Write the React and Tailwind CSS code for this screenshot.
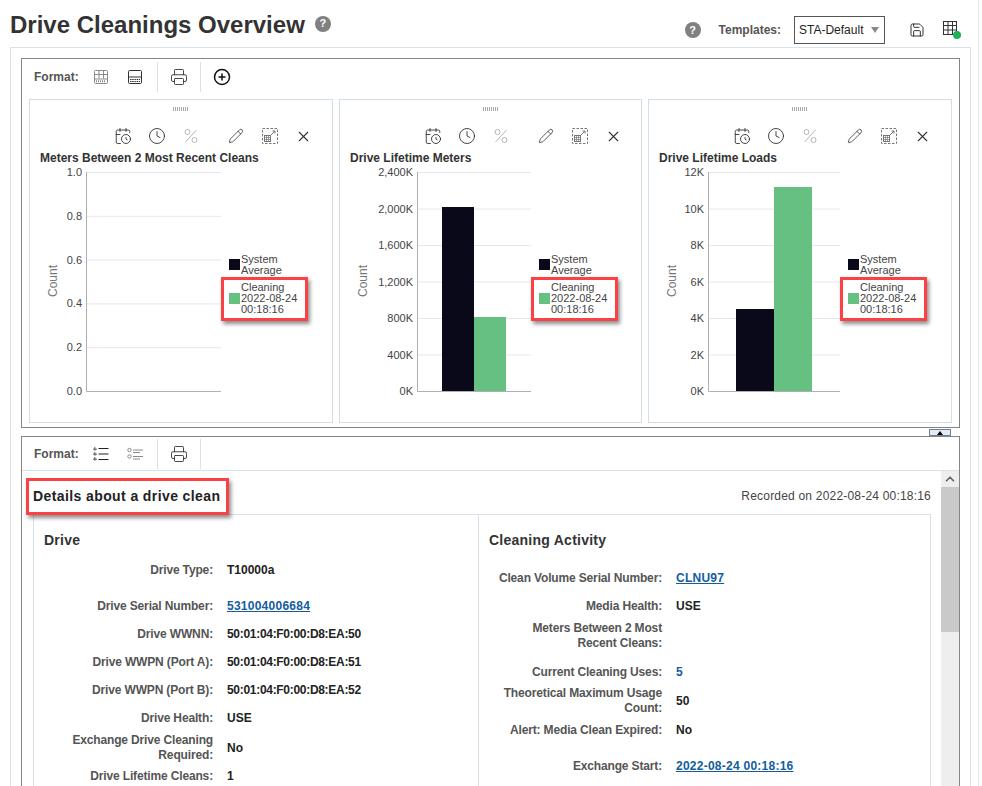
import { CalendarClock, Clock, Pencil, X, Printer, Save, CirclePlus, ChevronUp } from 'lucide-react';

const charts = [
  {
    title: 'Meters Between 2 Most Recent Cleans',
    cardClass: 'w-[304px]',
    axisX: 57,
    ticks: ['1.0', '0.8', '0.6', '0.4', '0.2', '0.0'],
    bars: [],
  },
  {
    title: 'Drive Lifetime Meters',
    cardClass: 'w-[303px]',
    axisX: 78,
    ticks: ['2,400K', '2,000K', '1,600K', '1,200K', '800K', '400K', '0K'],
    bars: [
      { x: 103, w: 32, top: 207, fill: '#090919' },
      { x: 135, w: 32, top: 317, fill: '#66c082' },
    ],
  },
  {
    title: 'Drive Lifetime Loads',
    cardClass: 'w-[304px]',
    axisX: 60,
    ticks: ['12K', '10K', '8K', '6K', '4K', '2K', '0K'],
    bars: [
      { x: 88, w: 38, top: 309, fill: '#090919' },
      { x: 126, w: 38, top: 187, fill: '#66c082' },
    ],
  },
];

const driveRows = [
  { label: 'Drive Type:', value: 'T10000a', cls: 'h-[28px]' },
  { label: 'Drive Serial Number:', value: '531004006684', link: true, cls: 'h-[28px] mt-[8px]' },
  { label: 'Drive WWNN:', value: '50:01:04:F0:00:D8:EA:50', tight: true, cls: 'h-[28px]' },
  { label: 'Drive WWPN (Port A):', value: '50:01:04:F0:00:D8:EA:51', tight: true, cls: 'h-[28px]' },
  { label: 'Drive WWPN (Port B):', value: '50:01:04:F0:00:D8:EA:52', tight: true, cls: 'h-[28px]' },
  { label: 'Drive Health:', value: 'USE', cls: 'h-[28px]' },
  { label: 'Exchange Drive Cleaning Required:', value: 'No', cls: 'h-[32px]' },
  { label: 'Drive Lifetime Cleans:', value: '1', cls: 'h-[24px]' },
];

const cleaningRows = [
  { label: 'Clean Volume Serial Number:', value: 'CLNU97', link: true, cls: 'h-[28px]' },
  { label: 'Media Health:', value: 'USE', cls: 'h-[28px]' },
  { label: 'Meters Between 2 Most Recent Cleans:', value: '', cls: 'h-[31px]' },
  { label: 'Current Cleaning Uses:', value: '5', blue: true, cls: 'h-[28px] mt-[7px]' },
  { label: 'Theoretical Maximum Usage Count:', value: '50', cls: 'h-[30px]' },
  { label: 'Alert: Media Clean Expired:', value: 'No', cls: 'h-[28px]' },
  { label: 'Exchange Start:', value: '2022-08-24 00:18:16', link: true, cls: 'h-[28px] mt-[8px]' },
];

function GridIcon({ color = '#8a8a8a' }) {
  return (
    <svg width="16" height="16" viewBox="0 0 16 16" fill="none" stroke={color}>
      <rect x="1.5" y="1.5" width="13" height="13" rx="1" />
      <path d="M1.5 5.5h13M6 1.5v8M10.5 1.5v8" />
      <path d="M1.5 10h13M3 12.2h10" strokeDasharray="1 1" strokeWidth="2" />
    </svg>
  );
}

function FooterGridIcon() {
  return (
    <svg width="16" height="16" viewBox="0 0 16 16" fill="none" stroke="#333">
      <rect x="1.5" y="1.5" width="13" height="13" rx="1" />
      <path d="M1.5 8h13" />
      <path d="M3 10.5h10M3 12.5h10" strokeDasharray="1.5 0.7" />
    </svg>
  );
}

function ListIcon({ muted }) {
  const c = muted ? '#8a8a8a' : '#222';
  return (
    <svg width="16" height="16" viewBox="0 0 16 16" fill="none" stroke={c}>
      {muted ? (
        <>
          <circle cx="2.5" cy="4" r="1.7" />
          <circle cx="2.5" cy="10.5" r="1.7" />
          <path d="M6 4h10M6 6.5h7M6 10.5h10M6 13h7" />
        </>
      ) : (
        <>
          <path d="M1 2h2v2H1zM1 7h2v2H1zM1 12h2v2H1z" strokeWidth="1" strokeDasharray="1 0.5" />
          <path d="M5.5 2.5h10M5.5 8h10M5.5 13.500h10" strokeWidth="1.2" />
        </>
      )}
    </svg>
  );
}

function PercentIcon() {
  return (
    <svg width="14" height="14" viewBox="0 0 14 14" fill="none" stroke="#b5b5b5">
      <circle cx="3.500" cy="3" r="2.500" />
      <circle cx="10.500" cy="11" r="2.500" />
      <path d="M12.500 1 1.500 13" />
    </svg>
  );
}

function ExpandIcon() {
  return (
    <svg width="16" height="16" viewBox="0 0 16 16" fill="none" stroke="#777">
      <rect x="0.500" y="0.500" width="15" height="15" strokeDasharray="2.500 1.500" />
      <rect x="2.500" y="7.500" width="6" height="6" />
      <path d="M2.500 9.500h6M2.500 11.500h6M4.500 7.500v6M6.500 7.500v6" strokeWidth="0.7" />
      <path d="M9 7l4-4M10.500 3h2.500v2.500" />
    </svg>
  );
}

function TableAddIcon() {
  return (
    <span className="relative block w-[18px] h-[18px]">
      <svg width="15" height="15" viewBox="0 0 15 15" fill="none" stroke="#333">
        <rect x="0.500" y="0.500" width="13" height="13" />
        <path d="M0.500 4.500h13M0.500 9h13M5 0.500v13M9.500 0.500v13" />
      </svg>
      <span className="absolute right-0 bottom-0 w-[8px] h-[8px] rounded-full bg-[#1fb356]" />
    </span>
  );
}

function HelpIcon({ cls }) {
  return (
    <span className={`flex items-center justify-center rounded-full bg-[#808080] text-white font-bold ${cls}`}>?</span>
  );
}

function Toolbar({ children, cls }) {
  return (
    <div className={`flex items-center h-[33px] ${cls}`}>
      <span className="ml-[12px] w-[52px] text-[12px] font-bold text-[#555]">Format:</span>
      {children}
    </div>
  );
}

function ToolCell({ children, cls }) {
  return <span className={`flex items-center justify-center h-[30px] ${cls}`}>{children}</span>;
}

function Chart({ chart }) {
  const top = 172;
  const bottom = 391;
  const step = (bottom - top) / (chart.ticks.length - 1);
  return (
    <div className={`relative border border-[#d3dde5] ${chart.cardClass} h-[324px]`}>
      <div className="flex justify-center pt-[7px] h-[15px]">
        <span className="w-[16px] h-[4px] bg-[repeating-linear-gradient(90deg,#aaa_0_1px,#fff_1px_2px)]" />
      </div>
      <div className="flex items-center h-[30px] mt-[6px] pl-[76px] text-[#333]">
        <span className="w-[34px] flex justify-center"><CalendarClock size={18} strokeWidth={1.2} /></span>
        <span className="w-[34px] flex justify-center"><Clock size={18} strokeWidth={1.2} /></span>
        <span className="w-[45px] flex justify-center pr-[11px]"><PercentIcon /></span>
        <span className="w-[34px] flex justify-center"><Pencil size={16} strokeWidth={1.2} /></span>
        <span className="w-[34px] flex justify-center"><ExpandIcon /></span>
        <span className="w-[32px] flex justify-center"><X size={17} strokeWidth={1.6} /></span>
      </div>
      <div className="ml-[10px] text-[12px] leading-[14px] font-bold text-[#333]">{chart.title}</div>
      <svg className="absolute left-0 top-0" width="300" height="320" viewBox="30 100 300 320" fontFamily="'Liberation Sans', sans-serif" fontSize="11">
        <g transform="translate(29 0)">
          {chart.ticks.map((t, i) => (
            <g key={t}>
              <text x={chart.axisX - 4} y={top + i * step + 4} textAnchor="end" fill="#444">{t}</text>
              {i < chart.ticks.length - 1 && (
                <path d={`M${chart.axisX} ${top + i * step + 0.5}H192`} stroke="#e6e8ef" />
              )}
            </g>
          ))}
          {chart.bars.map((b) => (
            <rect key={b.x} x={b.x} y={b.top} width={b.w} height={bottom - b.top} fill={b.fill} />
          ))}
          <path d={`M${chart.axisX + 0.5} ${top}V${bottom + 0.5}H192`} fill="none" stroke="#b0b0b0" />
          <text transform="translate(28 281) rotate(-90)" textAnchor="middle" fill="#777" fontSize="12">Count</text>
          <rect x="200" y="259" width="11" height="11" fill="#090919" />
          <text x="212" y="263" fill="#444">System</text>
          <text x="212" y="274" fill="#444">Average</text>
          <rect x="200" y="293" width="11" height="11" fill="#66c082" />
          <text x="212" y="291" fill="#444">Cleaning</text>
          <text x="212" y="302" fill="#444">2022-08-24</text>
          <text x="212" y="313" fill="#444">00:18:16</text>
        </g>
      </svg>
      <div className="absolute left-[191px] top-[177px] w-[87px] h-[44px] border-[3px] border-[#fb4143] shadow-[2px_3px_4px_rgba(0,0,0,0.45)]" />
    </div>
  );
}

function Row({ row, labelCls }) {
  return (
    <div className={`flex items-center gap-[14px] text-[12px] leading-[15px] font-bold ${row.cls}`}>
      <div className={`text-right text-[#555] tracking-[-0.15px] ${labelCls}`}>{row.label}</div>
      {row.link ? (
        <a className="text-[#145c9e] underline tracking-[0.25px]">{row.value}</a>
      ) : (
        <span className={`${row.blue ? 'text-[#145c9e]' : 'text-[#222]'} ${row.tight ? 'tracking-[-0.3px]' : ''}`}>{row.value}</span>
      )}
    </div>
  );
}

export default function App() {
  return (
    <div className="relative h-[786px] w-[982px] overflow-hidden bg-white font-['Liberation_Sans',Arial,sans-serif]">
      {/* Page header */}
      <div className="flex items-center h-[47px] pl-[10px] pr-[21px]">
        <h1 className="text-[24px] leading-[28px] font-bold text-[#333] mt-[3px]">Drive Cleanings Overview</h1>
        <HelpIcon cls="ml-[10px] w-[16px] h-[16px] text-[11px]" />
        <HelpIcon cls="ml-auto w-[16px] h-[16px] text-[11px] mt-[13px]" />
        <span className="ml-[18px] mt-[13px] text-[12px] font-bold text-[#555]">Templates:</span>
        <div className="ml-[13px] mt-[13px] flex items-center justify-between w-[91px] h-[28px] border border-[#555] pl-[4px] pr-[5px] text-[12px] text-[#222]">
          STA-Default
          <span className="w-0 h-0 border-x-[4px] border-x-transparent border-t-[6px] border-t-[#888]" />
        </div>
        <span className="ml-[24px] mt-[13px] text-[#222]"><Save size={16} strokeWidth={1.4} /></span>
        <span className="ml-[18px] mt-[13px]"><TableAddIcon /></span>
      </div>

      {/* Outer panel */}
      <div className="mx-[10px] w-[961px] h-[780px] border border-[#d9e2e9] pt-[10px] px-[10px]">
        <div className="w-[939px] h-[370px] border border-[#858585]">
          <Toolbar cls="mt-[1px]">
            <ToolCell cls="w-[32px] ml-[-1px]"><GridIcon /></ToolCell>
            <ToolCell cls="w-[36px]"><FooterGridIcon /></ToolCell>
            <ToolCell cls="w-[43px] ml-[4px] border-l border-[#d9e2e9]"><Printer size={18} strokeWidth={1.2} color="#333" /></ToolCell>
            <ToolCell cls="w-[43px] border-l border-[#d9e2e9]"><CirclePlus size={18} strokeWidth={2} color="#111" /></ToolCell>
          </Toolbar>
          <div className="flex gap-[6px] mt-[6px] ml-[7px]">
            {charts.map((c) => (
              <Chart key={c.title} chart={c} />
            ))}
          </div>
        </div>

        {/* Splitter */}
        <div className="flex justify-end h-[8px] pr-[9px]">
          <span className="flex items-center justify-center w-[22px] h-[7px] mt-px border border-[#6d7f92] bg-[#e4ebf2]">
            <span className="w-0 h-0 border-x-[3px] border-x-transparent border-b-[4px] border-b-black" />
          </span>
        </div>

        {/* Details panel */}
        <div className="w-[939px] h-[380px] border border-[#858585]">
          <Toolbar cls="mt-[1px] border-b border-[#d9e2e9]">
            <ToolCell cls="w-[32px] ml-[-1px]"><ListIcon /></ToolCell>
            <ToolCell cls="w-[36px]"><ListIcon muted /></ToolCell>
            <ToolCell cls="w-[43px] ml-[4px] border-l border-[#d9e2e9]"><Printer size={18} strokeWidth={1.2} color="#333" /></ToolCell>
            <ToolCell cls="w-[1px] border-l border-[#d9e2e9]" />
          </Toolbar>
          <div className="flex">
            <div className="w-[919px] pl-[11px] pr-[10px]">
              <div className="flex items-center justify-between h-[43px]">
                <span className="text-[14px] font-bold text-[#222] tracking-[0.4px] mt-[7px]">Details about a drive clean</span>
                <span className="text-[12px] text-[#444] tracking-[0.2px] mt-[7px]">Recorded on 2022-08-24 00:18:16</span>
              </div>
              <div className="flex h-[340px] border border-[#d9e2e9]">
                <div className="w-[445px] border-r border-[#d9e2e9]">
                  <h2 className="pl-[10px] mt-[17px] h-[24px] text-[14px] leading-[16px] font-bold text-[#333] tracking-[0.25px]">Drive</h2>
                  {driveRows.map((r) => (
                    <Row key={r.label} row={r} labelCls="w-[179px] pl-[32px]" />
                  ))}
                </div>
                <div className="flex-1">
                  <h2 className="pl-[10px] mt-[17px] h-[32px] text-[14px] leading-[16px] font-bold text-[#333] tracking-[0.25px]">Cleaning Activity</h2>
                  {cleaningRows.map((r) => (
                    <Row key={r.label} row={r} labelCls="w-[183px] pl-[14px]" />
                  ))}
                </div>
              </div>
            </div>
            <div className="w-[18px] h-[340px] bg-[#eeeeee]">
              <div className="flex items-center justify-center h-[16px] text-[#666]"><ChevronUp size={14} strokeWidth={3} /></div>
              <div className="h-[145px] bg-[#c9c9c9]" />
            </div>
          </div>
        </div>
      </div>

      {/* Highlight over the details heading */}
      <div className="absolute left-[26px] top-[478px] w-[203px] h-[37px] border-[3px] border-[#fb4143] shadow-[2px_3px_4px_rgba(0,0,0,0.45)]" />
      <div className="absolute left-[978px] top-0 h-full w-px bg-[#e4e9ee]" />
    </div>
  );
}
